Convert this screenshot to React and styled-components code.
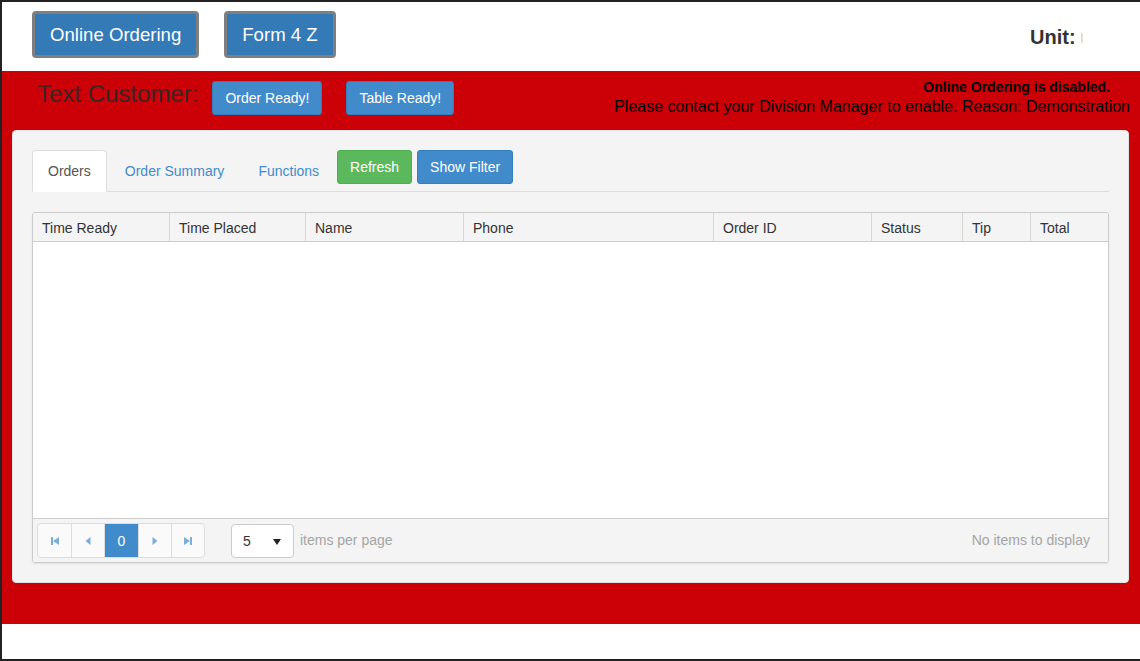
import React from "react";
import styled, { createGlobalStyle } from "styled-components";

const GlobalStyle = createGlobalStyle`
  html, body {
    margin: 0;
    padding: 0;
    background: #ffffff;
  }
  body {
    font-family: "Liberation Sans", Arial, Helvetica, sans-serif;
  }
  * { box-sizing: border-box; }
`;

const columns = [
  { title: "Time Ready", width: 137 },
  { title: "Time Placed", width: 136 },
  { title: "Name", width: 158 },
  { title: "Phone", width: 250 },
  { title: "Order ID", width: 158 },
  { title: "Status", width: 91 },
  { title: "Tip", width: 68 },
  { title: "Total", width: 79 },
];

const tabs = [
  { label: "Orders", active: true },
  { label: "Order Summary" },
  { label: "Functions" },
];

const PagerIcon = ({ type }) => {
  const c = "#7aaedc";
  if (type === "first")
    return (
      <svg width="10" height="10" viewBox="0 0 10 10">
        <rect x="1" y="1" width="2" height="8" fill={c} />
        <polygon points="9,1 3,5 9,9" fill={c} />
      </svg>
    );
  if (type === "prev")
    return (
      <svg width="10" height="10" viewBox="0 0 10 10">
        <polygon points="7.5,1 2.5,5 7.5,9" fill={c} />
      </svg>
    );
  if (type === "next")
    return (
      <svg width="10" height="10" viewBox="0 0 10 10">
        <polygon points="2.5,1 7.5,5 2.5,9" fill={c} />
      </svg>
    );
  return (
    <svg width="10" height="10" viewBox="0 0 10 10">
      <polygon points="1,1 7,5 1,9" fill={c} />
      <rect x="7" y="1" width="2" height="8" fill={c} />
    </svg>
  );
};

export default function App() {
  return (
    <>
      <GlobalStyle />
      <Frame>
        <Header>
          <NavButton>Online Ordering</NavButton>
          <NavButton>Form 4 Z</NavButton>
          <UnitBox>
            <UnitLabel>Unit:</UnitLabel>
            <UnitValue />
          </UnitBox>
        </Header>

        <RedBand>
          <TopRow>
            <TextCustomer>Text Customer:</TextCustomer>
            <ActionButton>Order Ready!</ActionButton>
            <ActionButton $gap={24}>Table Ready!</ActionButton>
            <Notice>
              <NoticeTitle>Online Ordering is disabled.</NoticeTitle>
              <NoticeText>
                Please contact your Division Manager to enable. Reason: Demonstration
              </NoticeText>
            </Notice>
          </TopRow>

          <Panel>
            <TabStrip>
              {tabs.map((t) => (
                <Tab key={t.label} $active={t.active}>
                  {t.label}
                </Tab>
              ))}
              <ToolButton $color="#5cb85c" $border="#4cae4c">
                Refresh
              </ToolButton>
              <ToolButton $color="#428bca" $border="#357ebd">
                Show Filter
              </ToolButton>
            </TabStrip>

            <Grid>
              <GridHeader>
                {columns.map((c, i) => (
                  <HeaderCell
                    key={c.title}
                    style={{ width: c.width }}
                    $last={i === columns.length - 1}
                  >
                    {c.title}
                  </HeaderCell>
                ))}
              </GridHeader>
              <GridBody />
              <GridFooter>
                <Pager>
                  <PagerButton>
                    <PagerIcon type="first" />
                  </PagerButton>
                  <PagerButton>
                    <PagerIcon type="prev" />
                  </PagerButton>
                  <PagerButton $active>0</PagerButton>
                  <PagerButton>
                    <PagerIcon type="next" />
                  </PagerButton>
                  <PagerButton>
                    <PagerIcon type="last" />
                  </PagerButton>
                </Pager>
                <PageSize>
                  <span>5</span>
                  <Caret />
                </PageSize>
                <MutedText>items per page</MutedText>
                <MutedText $right>No items to display</MutedText>
              </GridFooter>
            </Grid>
          </Panel>
        </RedBand>
      </Frame>
    </>
  );
}

const Frame = styled.div`
  width: 1140px;
  height: 661px;
  border-top: 2px solid #222222;
  border-left: 2px solid #222222;
  border-bottom: 2px solid #222222;
  display: flex;
  flex-direction: column;
  background: #ffffff;
  overflow: hidden;
`;

const Header = styled.header`
  height: 69px;
  flex-shrink: 0;
  display: flex;
  align-items: center;
  gap: 25px;
  padding-left: 30px;
`;

const NavButton = styled.button`
  height: 47px;
  padding: 0 15px;
  margin-top: -4px;
  background: #337ab7;
  color: #ffffff;
  border: 3px solid #7f7f7f;
  border-radius: 4px;
  font-family: "Liberation Sans", Arial, sans-serif;
  font-size: 18.6px;
  cursor: pointer;
`;

const UnitBox = styled.div`
  margin-left: auto;
  width: 110px;
  display: flex;
  align-items: center;
  margin-top: 2px;
`;

const UnitLabel = styled.span`
  font-size: 20px;
  font-weight: bold;
  color: #333333;
`;

const UnitValue = styled.span`
  display: inline-block;
  width: 2px;
  height: 10px;
  margin-left: 5px;
  background: #f0e6d8;
  border-left: 1px solid #e4d2bb;
`;

const RedBand = styled.div`
  height: 553px;
  flex-shrink: 0;
  background: #cc0007;
  display: flex;
  flex-direction: column;
`;

const TopRow = styled.div`
  height: 59px;
  display: flex;
  align-items: flex-start;
  padding-left: 35px;
`;

const TextCustomer = styled.span`
  margin-top: 9px;
  font-size: 24px;
  color: #3a2626;
  margin-right: 14px;
`;

const ActionButton = styled.button`
  margin-top: 10px;
  margin-left: ${(p) => (p.$gap ? `${p.$gap}px` : 0)};
  height: 34px;
  padding: 0 12px;
  background: #428bca;
  border: 1px solid #357ebd;
  border-radius: 3px;
  color: #ffffff;
  font-family: "Liberation Sans", Arial, sans-serif;
  font-size: 14px;
`;

const Notice = styled.div`
  margin-left: auto;
  display: flex;
  flex-direction: column;
  align-items: flex-end;
  padding-right: 10px;
  padding-top: 8px;
  color: #000000;
`;

const NoticeTitle = styled.div`
  font-size: 14px;
  font-weight: bold;
  line-height: 16px;
  margin-right: 20px;
`;

const NoticeText = styled.div`
  font-size: 16px;
  line-height: 20px;
  margin-top: 2px;
`;

const Panel = styled.section`
  margin: 0 11px 0 10px;
  height: 453px;
  background: #f4f4f4;
  border: 1px solid #e2e2e2;
  border-radius: 4px;
  padding: 19px 19px;
  display: flex;
  flex-direction: column;
`;

const TabStrip = styled.div`
  display: flex;
  align-items: flex-start;
  height: 42px;
  border-bottom: 1px solid #dddddd;
  flex-shrink: 0;
`;

const Tab = styled.div`
  height: 42px;
  padding: 0 15px;
  margin-right: 2px;
  display: flex;
  align-items: center;
  font-size: 14px;
  color: ${(p) => (p.$active ? "#555555" : "#428bca")};
  background: ${(p) => (p.$active ? "#ffffff" : "transparent")};
  border: 1px solid ${(p) => (p.$active ? "#dddddd" : "transparent")};
  border-bottom-color: transparent;
  border-radius: 4px 4px 0 0;
`;

const ToolButton = styled.button`
  height: 34px;
  padding: 0 12px;
  margin-right: 5px;
  background: ${(p) => p.$color};
  border: 1px solid ${(p) => p.$border};
  border-radius: 3px;
  color: #ffffff;
  font-family: "Liberation Sans", Arial, sans-serif;
  font-size: 14px;
`;

const Grid = styled.div`
  margin-top: 20px;
  flex: 1;
  display: flex;
  flex-direction: column;
  border: 1px solid #cccccc;
  border-radius: 3px;
  box-shadow: 0 1px 2px rgba(0, 0, 0, 0.08);
  overflow: hidden;
`;

const GridHeader = styled.div`
  display: flex;
  height: 29px;
  background: #f4f4f4;
  border-bottom: 1px solid #cccccc;
  flex-shrink: 0;
`;

const HeaderCell = styled.div`
  padding: 1px 9px 0;
  display: flex;
  align-items: center;
  font-size: 14px;
  color: #333333;
  border-right: ${(p) => (p.$last ? "none" : "1px solid #d6d6d6")};
  flex-shrink: 0;
`;

const GridBody = styled.div`
  flex: 1;
  background: #ffffff;
`;

const GridFooter = styled.div`
  height: 44px;
  flex-shrink: 0;
  border-top: 1px solid #cccccc;
  background: #f4f4f4;
  display: flex;
  align-items: center;
  padding: 0 18px 0 4px;
`;

const Pager = styled.div`
  display: flex;
  height: 35px;
  border: 1px solid #dddddd;
  border-radius: 4px;
  overflow: hidden;
  background: #fafafa;
`;

const PagerButton = styled.div`
  width: 33.2px;
  display: flex;
  align-items: center;
  justify-content: center;
  font-size: 14px;
  color: ${(p) => (p.$active ? "#ffffff" : "#428bca")};
  background: ${(p) => (p.$active ? "#428bca" : "transparent")};
  border-left: 1px solid #dddddd;
  &:first-child {
    border-left: none;
  }
`;

const PageSize = styled.div`
  margin-left: 26px;
  width: 63px;
  height: 34px;
  background: #ffffff;
  border: 1px solid #cccccc;
  border-radius: 4px;
  display: flex;
  align-items: center;
  justify-content: space-between;
  padding: 0 12px 0 11px;
  font-size: 14px;
  color: #333333;
`;

const Caret = styled.span`
  width: 0;
  height: 0;
  border-left: 4px solid transparent;
  border-right: 4px solid transparent;
  border-top: 6px solid #222222;
  margin-top: 2px;
`;

const MutedText = styled.span`
  font-size: 14px;
  color: #a5a5a5;
  margin-left: ${(p) => (p.$right ? "auto" : "6px")};
  margin-top: -1px;
`;
